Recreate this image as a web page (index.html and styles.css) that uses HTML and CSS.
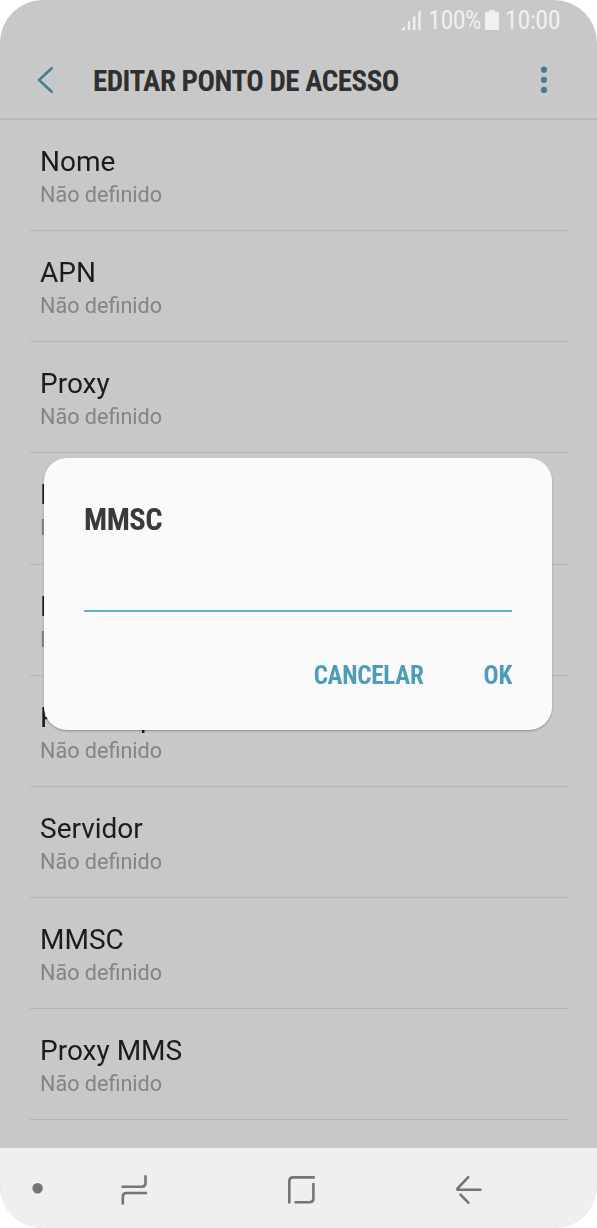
FILE: index.html
```html
<!DOCTYPE html>
<html lang="pt">
<head>
    <meta charset="UTF-8">
    <meta name="viewport" content="width=device-width, initial-scale=1.0">
    <title>Editar ponto de acesso</title>
    <link rel="stylesheet" href="styles.css">
</head>
<body>
    <div class="phone">
        <div class="status-bar">
            <svg class="signal" width="20" height="20" viewBox="0 0 20 20">
                <path d="M0 20l4-4v4zM6.700 12l2.400-1.500V20H6.700zM12 7.200l2.400-1.700V20H12zM17.300 1.700L19.700 0v20h-2.400z"/>
            </svg>
            <span class="battery-level">100%</span>
            <svg class="battery" width="14" height="20" viewBox="0 0 14 20">
                <path d="M4 0h6v2h3a1 1 0 0 1 1 1v16a1 1 0 0 1-1 1H1a1 1 0 0 1-1-1V3a1 1 0 0 1 1-1h3z"/>
            </svg>
            <span class="clock">10:00</span>
        </div>

        <header>
            <svg class="back" width="18" height="28" viewBox="0 0 18 28">
                <path d="M15.500 1.500L2 14l13.500 12.500"/>
            </svg>
            <h1>EDITAR PONTO DE ACESSO</h1>
            <svg class="more" width="8" height="28" viewBox="0 0 8 28">
                <circle cx="4" cy="3.700" r="3.100"/>
                <circle cx="4" cy="13.800" r="3.100"/>
                <circle cx="4" cy="23.900" r="3.100"/>
            </svg>
        </header>

        <main>
            <ul class="settings">
                <li><h2>Nome</h2><p>Não definido</p></li>
                <li><h2>APN</h2><p>Não definido</p></li>
                <li><h2>Proxy</h2><p>Não definido</p></li>
                <li><h2>Porta</h2><p>Não definido</p></li>
                <li><h2>Nome do utilizador</h2><p>Não definido</p></li>
                <li><h2>Palavra-passe</h2><p>Não definido</p></li>
                <li><h2>Servidor</h2><p>Não definido</p></li>
                <li><h2>MMSC</h2><p>Não definido</p></li>
                <li><h2>Proxy MMS</h2><p>Não definido</p></li>
            </ul>
        </main>

        <nav>
            <svg width="597" height="80" viewBox="0 0 597 80">
                <circle class="dot" cx="37.600" cy="40.200" r="5.200"/>
                <path d="M121.500 38.700h20.300q3.700 0 3.700-3.700V27.200M147 45H126.500q-3.700 0-3.700 3.700V56.500"/>
                <path d="M314.800 29.400H293q-3.700 0-3.700 3.700V55.500M294.500 54.200h15.200q3.700 0 3.700-3.700V35"/>
                <path class="round" d="M468.300 29.200L457.500 40.500q-.6 1.300.8 1.300H480.500M460.500 46.700l7.800 8"/>
            </svg>
        </nav>

        <div class="dialog">
            <h2>MMSC</h2>
            <input type="text" class="dialog-input">
            <div class="actions">
                <button type="button">CANCELAR</button>
                <button type="button">OK</button>
            </div>
        </div>
    </div>
</body>
</html>
```
FILE: styles.css
```css
* {
    box-sizing: border-box;
}
body {
    margin: 0;
    background-color: #fff;
    font-family: Roboto, sans-serif;
}
h1, h2, p, ul {
    margin: 0;
    padding: 0;
    font-weight: 400;
}
svg {
    display: block;
    flex-shrink: 0;
}
.phone {
    position: relative;
    display: flex;
    flex-direction: column;
    width: 597px;
    height: 1228px;
    border-radius: 43px;
    background-color: #c8c8c8;
    overflow: hidden;
}
.status-bar {
    display: flex;
    align-items: center;
    justify-content: flex-end;
    height: 40px;
    padding-right: 37px;
    color: #f0f0f0;
    font-family: "Roboto Condensed", Roboto, sans-serif;
    font-stretch: 75%;
    font-size: 26px;
    letter-spacing: -0.500px;
}
.status-bar svg {
    fill: #f0f0f0;
}
.battery-level {
    margin: 0 4px 0 7px;
}
.clock {
    margin-left: 6px;
}
header {
    display: flex;
    align-items: center;
    height: 79.500px;
    padding: 2px 49px 0 37px;
    border-bottom: 2px solid #bbb;
}
.back {
    fill: none;
    stroke: #427e98;
    stroke-width: 2.500;
}
.more {
    margin-left: auto;
    fill: #427e98;
}
h1 {
    margin-left: 38px;
    padding-top: 3px;
    color: #303030;
    font-family: "Roboto Condensed", Roboto, sans-serif;
    font-stretch: 75%;
    font-weight: 700;
    font-size: 29px;
    letter-spacing: -0.500px;
}
main {
    flex: 1;
    padding: 0 29px 0 30px;
    will-change: transform;
}
.settings {
    list-style: none;
}
.settings li {
    height: 111.150px;
    padding: 25px 10px 0;
    border-bottom: 1px solid #b5b5b5;
}
.settings h2 {
    color: #1c1c1c;
    font-size: 28px;
    line-height: 34px;
}
.settings p {
    color: #848484;
    font-size: 21.600px;
    line-height: 32px;
}
nav {
    height: 80px;
    background-color: #efefef;
}
nav path {
    fill: none;
    stroke: #757575;
    stroke-width: 2.600;
}
nav .round {
    stroke-linecap: round;
}
nav .dot {
    fill: #757575;
}
/* sits over the dimmed settings list */
.dialog {
    position: absolute;
    top: 457.500px;
    left: 44px;
    width: 508px;
    height: 272.500px;
    padding: 44px 40px 0;
    border-radius: 23px;
    background-color: #fafafa;
    box-shadow: 0 1px 2px rgba(0, 0, 0, 0.3);
    font-family: "Roboto Condensed", Roboto, sans-serif;
    font-stretch: 75%;
}
.dialog h2 {
    color: #3a3a3a;
    font-weight: 700;
    font-size: 30.500px;
    line-height: 36px;
    letter-spacing: -0.500px;
}
.dialog-input {
    display: block;
    width: 100%;
    height: 74px;
    padding: 0;
    border: none;
    border-bottom: 2.500px solid #5fb3cd;
    background: none;
    font-size: 28px;
    outline: none;
}
.actions {
    display: flex;
    justify-content: flex-end;
    gap: 60px;
    margin-top: 49px;
}
.actions button {
    padding: 0;
    border: none;
    background: none;
    color: #4d9dba;
    font-family: inherit;
    font-stretch: inherit;
    font-weight: 700;
    font-size: 25px;
    line-height: 30px;
    letter-spacing: -0.250px;
}
```
